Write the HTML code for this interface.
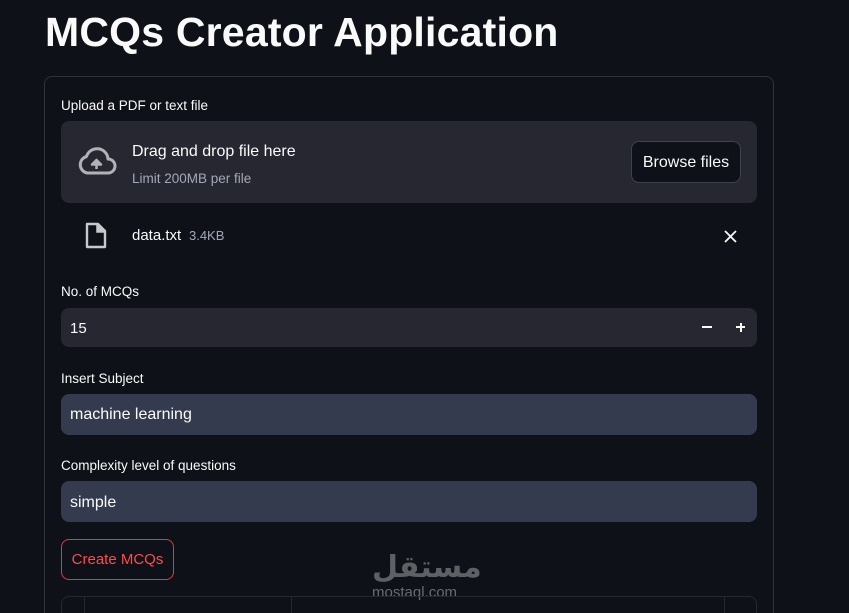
<!DOCTYPE html>
<html style="overflow:hidden;height:613px"><head><meta charset="utf-8"><style>
*{margin:0;padding:0;box-sizing:border-box}
body{width:849px;height:613px;background:#0e1117;overflow:hidden;position:relative;font-family:"Liberation Sans",sans-serif;color:#fafafa}
.a{position:absolute}
h1{position:absolute;left:45px;top:9px;font-size:41px;font-weight:bold;letter-spacing:0.2px;color:#fafafa}
.lbl{position:absolute;left:61px;font-size:13.5px;color:#fafafa}
.box{position:absolute;left:61px;width:696px;border-radius:8px}
.txt{position:absolute;font-size:16px}
</style></head><body>
<h1>MCQs Creator Application</h1>
<div class="a" style="left:44px;top:76px;width:730px;height:560px;border:1px solid #31333b;border-radius:8px"></div>
<div class="lbl" style="top:98px">Upload a PDF or text file</div>
<div class="box" style="top:121px;height:82px;background:#262730"></div>
<svg class="a" style="left:77px;top:146px" width="40" height="30" viewBox="0 0 40 30"><path d="M10 27 H31 A7 7 0 0 0 31 13 A11 11 0 0 0 9.5 10.5 A8.5 8.5 0 0 0 10 27 Z" fill="none" stroke="#b0b2b8" stroke-width="3" stroke-linejoin="round"/><path d="M19.5 23 V15 M15 18.5 L19.5 14 L24 18.5 Z" fill="#b0b2b8" stroke="#b0b2b8" stroke-width="2.5" stroke-linejoin="round"/></svg>
<div class="txt" style="left:132px;top:143px">Drag and drop file here</div>
<div class="a" style="left:132px;top:171px;font-size:13.5px;color:#a3a8b8">Limit 200MB per file</div>
<div class="a" style="left:631px;top:141px;width:110px;height:42px;border:1px solid #40424b;border-radius:8px;background:#0e1117;font-size:16px;line-height:42px;text-align:center">Browse files</div>
<svg class="a" style="left:84px;top:222px" width="24" height="28" viewBox="0 0 24 28"><path d="M3 2 H14 L21 9 V25 H3 Z" fill="none" stroke="#c8c9ce" stroke-width="2.4" stroke-linejoin="round"/><path d="M13 2 V10 H21" fill="#c8c9ce" stroke="#c8c9ce" stroke-width="1.5"/></svg>
<div class="txt" style="left:132px;top:227px;font-size:15px">data.txt <span style="font-size:13px;color:#a3a8b8">&nbsp;3.4KB</span></div>
<svg class="a" style="left:723px;top:229px" width="15" height="15" viewBox="0 0 15 15"><path d="M2 2 L13 13 M13 2 L2 13" stroke="#fafafa" stroke-width="1.8"/></svg>
<div class="lbl" style="top:284px">No. of MCQs</div>
<div class="box" style="top:308px;height:39px;background:#262730"></div>
<div class="txt" style="left:70px;top:320px;font-size:15px">15</div>
<div class="a" style="left:702px;top:326px;width:10px;height:2px;background:#fafafa"></div>
<div class="a" style="left:736px;top:326px;width:9px;height:2px;background:#fafafa"></div>
<div class="a" style="left:739.5px;top:322.5px;width:2px;height:9px;background:#fafafa"></div>
<div class="lbl" style="top:371px">Insert Subject</div>
<div class="box" style="top:394px;height:41px;background:#343b4e"></div>
<div class="txt" style="left:70px;top:406px">machine learning</div>
<div class="lbl" style="top:458px">Complexity level of questions</div>
<div class="box" style="top:481px;height:41px;background:#343b4e"></div>
<div class="txt" style="left:70px;top:494px">simple</div>
<div class="a" style="left:61px;top:539px;width:113px;height:41px;border:1px solid #e0393e;border-radius:8px;color:#ff4b4b;font-size:15px;line-height:39px;text-align:center">Create MCQs</div>
<div class="a" style="left:372px;top:551px;width:104px;font-size:30px;font-weight:bold;color:#5f6065;text-align:center;line-height:34px;font-family:'DejaVu Sans',sans-serif">مستقل</div>
<div class="a" style="left:372px;top:584px;font-size:15px;color:#6a6b70">mostaql.com</div>
<div class="a" style="left:61px;top:596px;width:696px;height:30px;border:1px solid #262730;border-radius:8px"></div>
<div class="a" style="left:84px;top:597px;width:1px;height:20px;background:#262730"></div>
<div class="a" style="left:291px;top:597px;width:1px;height:20px;background:#262730"></div>
<div class="a" style="left:724px;top:597px;width:1px;height:20px;background:#262730"></div>
</body></html>
